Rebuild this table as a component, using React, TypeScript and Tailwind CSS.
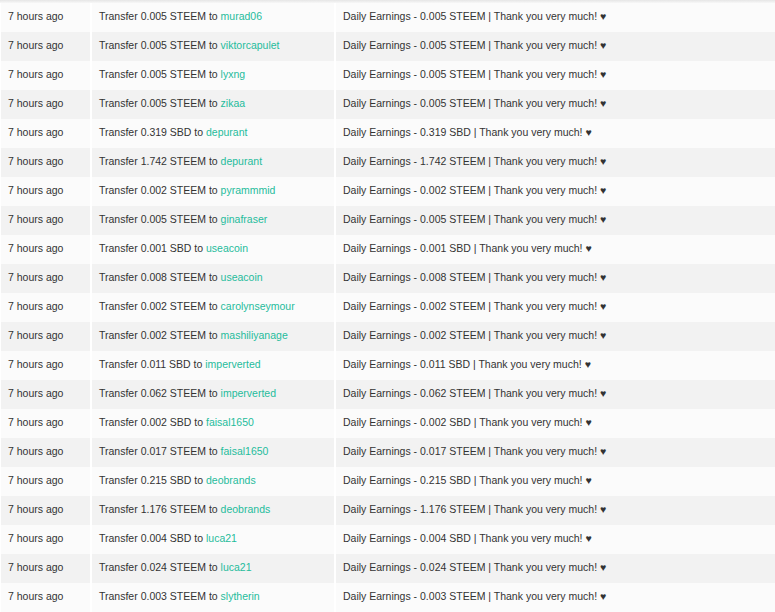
const rows: [string, string, string][] = [
  ['0.005', 'STEEM', 'murad06'],
  ['0.005', 'STEEM', 'viktorcapulet'],
  ['0.005', 'STEEM', 'lyxng'],
  ['0.005', 'STEEM', 'zikaa'],
  ['0.319', 'SBD', 'depurant'],
  ['1.742', 'STEEM', 'depurant'],
  ['0.002', 'STEEM', 'pyrammmid'],
  ['0.005', 'STEEM', 'ginafraser'],
  ['0.001', 'SBD', 'useacoin'],
  ['0.008', 'STEEM', 'useacoin'],
  ['0.002', 'STEEM', 'carolynseymour'],
  ['0.002', 'STEEM', 'mashiliyanage'],
  ['0.011', 'SBD', 'imperverted'],
  ['0.062', 'STEEM', 'imperverted'],
  ['0.002', 'SBD', 'faisal1650'],
  ['0.017', 'STEEM', 'faisal1650'],
  ['0.215', 'SBD', 'deobrands'],
  ['1.176', 'STEEM', 'deobrands'],
  ['0.004', 'SBD', 'luca21'],
  ['0.024', 'STEEM', 'luca21'],
  ['0.003', 'STEEM', 'slytherin'],
];

export default function App() {
  return (
    <div className="w-[775px] h-[612px] overflow-hidden bg-white text-[10.5px] text-[#333] font-['Liberation_Sans',Arial,sans-serif]">
      {/* top shadow edge */}
      <div className="h-[3px] bg-gradient-to-b from-[#e6e6e6] to-[#f7f7f7]" />
      {rows.map(([amount, coin, user], i) => {
        const bg = i % 2 === 0 ? 'bg-[#fbfbfb]' : 'bg-[#f2f2f2]';
        return (
          <div key={i} className="grid grid-cols-[89px_242px_1fr] gap-x-[2px] h-[29px] pl-[1px]">
            <div className={`${bg} flex items-center pl-[7px] pb-[2px]`}>7 hours ago</div>
            <div className={`${bg} flex items-center pl-[7px] pb-[2px]`}>
              Transfer {amount} {coin} to&nbsp;<span className="text-[#1fbc9c]">{user}</span>
            </div>
            <div className={`${bg} flex items-center pl-[7px] pb-[2px]`}>
              Daily Earnings - {amount} {coin} | Thank you very much! ♥
            </div>
          </div>
        );
      })}
    </div>
  );
}
